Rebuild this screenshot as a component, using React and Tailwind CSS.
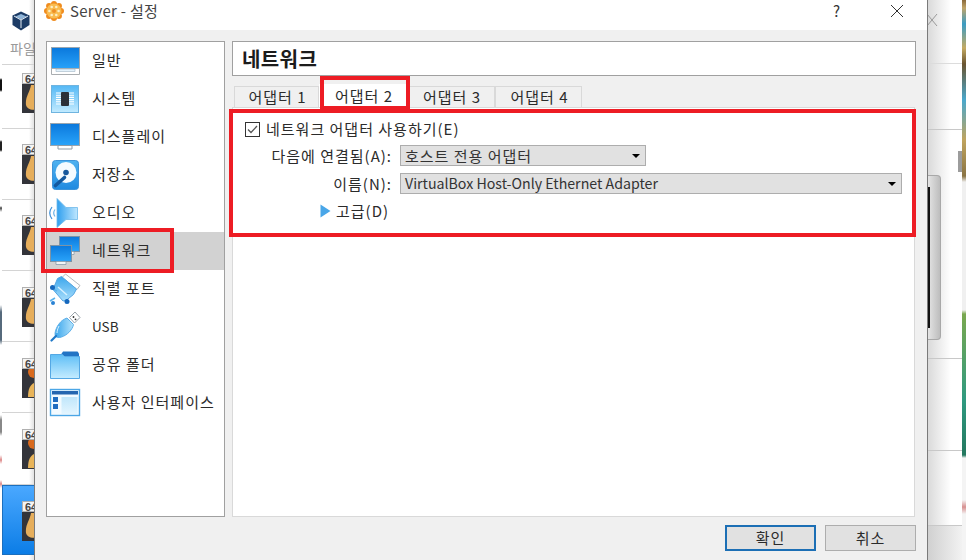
import React from "react";

const Lg = ({ id, a, b, x2 = 0, y2 = 1 }) => (
  <defs>
    <linearGradient id={id} x1="0" y1="0" x2={x2} y2={y2}>
      <stop offset="0" stopColor={a} />
      <stop offset="1" stopColor={b} />
    </linearGradient>
  </defs>
);

const Svg = ({ children, size = 32, vb = 32, className = "" }) => (
  <svg width={size} height={size} viewBox={`0 0 ${vb} ${vb}`} className={`shrink-0 ${className}`}>
    {children}
  </svg>
);

const IconGeneral = () => (
  <Svg>
    <Lg id="g1" a="#0a78dc" b="#2aa4fa" />
    <rect x="2.5" y="2.5" width="28" height="22" fill="url(#g1)" stroke="#9aa6b0" />
    <path d="M2.5 23.5h28v6h-28z" fill="#fff" stroke="#a9adb0" />
    <path d="M7 24h19v2.5H7z" fill="#e4f2fb" stroke="#9fb4c4" strokeWidth=".6" />
  </Svg>
);
const IconSystem = () => (
  <Svg>
    <Lg id="g2" a="#54b8f5" b="#c2ebff" />
    <rect x="2.5" y="2.5" width="27" height="27" fill="url(#g2)" stroke="#6fb4df" />
    <path d="M7 10h18M7 12.200h18M7 14.400h18M7 16.600h18M7 18.800h18M7 21h18" stroke="#fff" strokeWidth="1.100" />
    <rect x="12" y="9" width="8" height="14" rx="1" fill="#2b3038" />
  </Svg>
);
const IconDisplay = () => (
  <Svg>
    <Lg id="g3" a="#0a78dc" b="#2aa4fa" />
    <rect x="1.500" y="2.500" width="29" height="22" fill="url(#g3)" stroke="#9aa6b0" />
    <path d="M9 24.500h14v3.500H9z" fill="#fff" stroke="#8f9ba5" />
  </Svg>
);
const IconStorage = () => (
  <Svg>
    <Lg id="g4" a="#4fb2f0" b="#1f8ae0" />
    <rect x="3.500" y="1.500" width="26" height="29" rx="3" fill="url(#g4)" stroke="#3d93d8" />
    <circle cx="17" cy="13.500" r="10.500" fill="#f4fbff" />
    <circle cx="17" cy="13.500" r="2.800" fill="#16589c" />
    <path d="M6.500 26.500l9-8" stroke="#13599f" strokeWidth="3.600" strokeLinecap="round" />
  </Svg>
);
const IconAudio = () => (
  <Svg>
    <Lg id="g5" a="#2f9fee" b="#bfe7ff" x2={1} y2={0} />
    <path d="M8 1.500l9 9h11.500v12H17l-9 8z" fill="url(#g5)" stroke="#6fb9ea" strokeWidth=".8" />
    <path d="M3 10c-3 4-3 8 0 12" fill="none" stroke="#3d8fd8" strokeWidth="1.200" />
    <path d="M6 12.500c-1.500 2-1.500 5 0 7" fill="none" stroke="#6eb3e6" strokeWidth="1.200" />
  </Svg>
);
const IconNetwork = () => (
  <Svg>
    <Lg id="g6" a="#0a78dc" b="#2aa4fa" />
    <rect x="10.500" y="1.500" width="20" height="15" fill="url(#g6)" stroke="#7c93a6" />
    <path d="M16 16.500h9v3h-9z" fill="#fff" stroke="#7c93a6" strokeWidth=".7" />
    <rect x="1.500" y="10.500" width="21" height="16" fill="url(#g6)" stroke="#7c93a6" />
    <path d="M7 26.500h10v3H7z" fill="#f3f6f8" stroke="#7c93a6" strokeWidth=".7" />
  </Svg>
);
const IconSerial = () => (
  <Svg>
    <Lg id="g7" a="#3ba6ec" b="#a8defc" />
    <path d="M16.500 1l14.500 11.500-3 4L13 4.500z" fill="#fff" stroke="#b3b9bd" />
    <path d="M8.500 5.500l4-2 15 12.500-3 5.500-7.500 6-3 .5L4 16.500z" fill="url(#g7)" stroke="#55a6e3" />
    <path d="M9 14l9 8" stroke="#d6f0ff" strokeWidth="1.500" />
    <path d="M1 28l5-3M17 30l2-3M8 18l-4-2" stroke="#5bb2ec" strokeWidth="1.500" />
    <circle cx="3.500" cy="14.500" r="2.500" fill="#1668bd" />
    <circle cx="18" cy="28.500" r="2.500" fill="#1668bd" />
    <circle cx="4" cy="30" r="2" fill="#2a82d4" />
  </Svg>
);
const IconUsb = () => (
  <Svg>
    <Lg id="g8" a="#39a5ec" b="#b5e4fc" x2={1} y2={0} />
    <path d="M20.500 6.500L26 1l5 5.500-5.500 5.500z" fill="#fff" stroke="#9aa3aa" />
    <circle cx="24.500" cy="6" r=".9" fill="#333" />
    <circle cx="26.500" cy="8.300" r=".9" fill="#333" />
    <path d="M18 7l6.500 6.500c-1 5-6 10.500-12 12.500-3 1-5 .5-6-1S6 19 9.500 13.500C12 10 15 8 18 7z" fill="url(#g8)" stroke="#5baee8" />
    <path d="M7 25l-4.500 4.500" stroke="#1f78c8" strokeWidth="2.200" strokeLinecap="round" />
    <path d="M10 15c-1.500 3-2 5.500-2 7" stroke="#d8f2ff" fill="none" />
  </Svg>
);
const IconFolder = () => (
  <Svg>
    <Lg id="g9" a="#5ebef6" b="#c5ecff" />
    <path d="M14 2.500h14.500l1.500 2V7H11z" fill="#2274c4" />
    <path d="M1.500 5.500h12l2 2H30.500v22h-29z" fill="url(#g9)" stroke="#55a8e4" />
  </Svg>
);
const IconUi = () => (
  <Svg>
    <Lg id="g10" a="#c0e6fb" b="#e3f5ff" />
    <rect x="1.500" y="2.500" width="29" height="26" fill="#f2faff" stroke="#4ba6e6" strokeWidth="1.400" />
    <rect x="3" y="4" width="26" height="3.500" fill="#2465b0" />
    <rect x="4" y="10" width="5" height="5" fill="#1f6cc0" />
    <rect x="4" y="17" width="5" height="5" fill="#1f6cc0" />
    <rect x="12.500" y="10" width="16" height="17" fill="url(#g10)" />
  </Svg>
);

const Gear = () => (
  <svg width="20" height="20" viewBox="0 0 20 20" className="shrink-0">
    {[0, 45, 90, 135, 180, 225, 270, 315].map((a) => (
      <circle
        key={a}
        cx={10 + 7 * Math.cos((a * Math.PI) / 180)}
        cy={10 + 7 * Math.sin((a * Math.PI) / 180)}
        r="3"
        fill="#f08c1e"
      />
    ))}
    <circle cx="10" cy="10" r="7.500" fill="#f9bc50" />
    {[0, 60, 120, 180, 240, 300].map((a) => (
      <circle
        key={a}
        cx={10 + 4.600 * Math.cos((a * Math.PI) / 180)}
        cy={10 + 4.600 * Math.sin((a * Math.PI) / 180)}
        r="1.300"
        fill="#fdeec6"
      />
    ))}
    <circle cx="10" cy="10" r="2" fill="#ee8f28" />
  </svg>
);

const VBoxLogo = () => (
  <svg width="18" height="20" viewBox="0 0 18 20" className="shrink-0">
    <path d="M9 0.500L17.500 4.500V14L9 19.500 0.500 14V4.500z" fill="#1d3c66" />
    <path d="M9 3L14.500 5.500 9 8.500 3.500 5.500z" fill="#8fb4d8" />
    <path d="M9 9v8M2 5l7 4 7-4" stroke="#e6edf4" strokeWidth="1" fill="none" />
  </svg>
);

const Tile = ({ orange }) => (
  <div className="ml-[22px] w-[24px] h-[40px] bg-[#33343a] shrink-0">
    <div className="h-[11px] w-full bg-[#f4f4f4] border border-[#b0b0b0] pl-[2px] text-[11px] leading-[10px] font-bold text-[#444] font-['Liberation_Sans',sans-serif]">
      64
    </div>
    <svg width="24" height="29" viewBox="0 0 24 29" className="block">
      {orange ? (
        <>
          <circle cx="12" cy="3" r="6" fill="#d96a1e" />
          <path d="M6 28c0-8 2-12 6-14 4 2 6 6 6 14z" fill="#e8b45a" />
        </>
      ) : (
        <path d="M9 1c-1 7-6 12-5 20 1 4 6 6 12 4 5-2 6-6 5-10C19 9 14 6 13 1z" fill="#e6ae5c" />
      )}
    </svg>
  </div>
);

const bgRows = [
  { h: "h-[64px]", pt: "pt-[8px]", orange: false },
  { h: "h-[71px]", pt: "pt-[15px]", orange: false },
  { h: "h-[71px]", pt: "pt-[15px]", orange: false },
  { h: "h-[71px]", pt: "pt-[16px]", orange: false },
  { h: "h-[71px]", pt: "pt-[16px]", orange: true },
  { h: "h-[72px]", pt: "pt-[16px]", orange: true },
];

const items = [
  ["일반", IconGeneral],
  ["시스템", IconSystem],
  ["디스플레이", IconDisplay],
  ["저장소", IconStorage],
  ["오디오", IconAudio],
  ["네트워크", IconNetwork],
  ["직렬 포트", IconSerial],
  ["USB", IconUsb],
  ["공유 폴더", IconFolder],
  ["사용자 인터페이스", IconUi],
];

const Combo = ({ children, w, latin }) => (
  <div className={`${w} h-[21px] bg-[#e1e1e1] border border-[#adadad] flex items-center justify-between pl-[4px] pr-[5px] text-[#333] leading-none`}>
    <span className={latin ? "text-[14.200px] tracking-normal" : ""}>{children}</span>
    <span className="w-0 h-0 border-x-[4px] border-x-transparent border-t-[4px] border-t-black" />
  </div>
);

const Tab = ({ children, active, w }) => (
  <div
    className={
      active
        ? `${w} h-[23px] bg-white flex items-center justify-center pl-[2px]`
        : `${w} h-[21px] bg-[#f0f0f0] border border-b-0 border-[#d9d9d9] flex items-center justify-center pl-[2px]`
    }
  >
    {children}
  </div>
);

const rowShade = "bg-[linear-gradient(90deg,#dadada,#fff_60%)]";

export default function App() {
  return (
    <div className="w-[966px] h-[560px] overflow-hidden flex bg-white text-[#2b2b2b] text-[15px] tracking-[1px] font-['Noto_Sans_CJK_KR','Noto_Sans',sans-serif]">
      {/* window behind, left */}
      <div className="w-[34px] shrink-0 h-full flex bg-[linear-gradient(90deg,#fff_85%,#e2e2e2)]">
        <div className="w-[2px] h-full shrink-0 bg-[linear-gradient(180deg,#fff_0,#fff_78px,#111_80px,#111_90px,#fff_92px,#fff_140px,#222_142px,#222_150px,#fff_152px,#fff_206px,#444_208px,#fff_212px,#fff_305px,#566a7c_312px,#566a7c_340px,#fff_345px,#fff_415px,#888_420px,#888_432px,#fff_436px,#fff_455px,#d88_460px,#fff_464px,#fff_480px,#d88_484px,#fff_488px)]" />
        <div className="w-[32px] h-full flex flex-col overflow-hidden tracking-normal">
          <div className="h-[65px] shrink-0 border-b border-[#d4d4d4] flex flex-col pl-[10px] pt-[11px]">
            <VBoxLogo />
            <div className="mt-[7px] -ml-[2px] whitespace-nowrap text-[14px] leading-[20px] text-[#9a9a9a]">파일</div>
          </div>
          <div className="h-[64px] shrink-0 pt-[8px] border-b border-[#d4d4d4] -ml-[2px]">
            <Tile />
          </div>
          {bgRows.slice(1).map((r, i) => (
            <div key={i} className={`${r.h} ${r.pt} shrink-0 -ml-[2px] border-b border-[#d4d4d4]`}>
              <Tile orange={r.orange} />
            </div>
          ))}
          <div className="h-[70px] shrink-0 pt-[15px] bg-[linear-gradient(180deg,#4aa8ff,#0c7de6)] border border-r-0 border-[#1b6fbe]">
            <div className="-ml-[3px]">
              <Tile />
            </div>
          </div>
        </div>
      </div>

      {/* dialog */}
      <div className="w-[894px] shrink-0 h-full flex flex-col bg-[#f0f0f0] border-x border-[#7a7a7a] relative">
        <div className="h-[30px] shrink-0 bg-white flex items-center pl-[9px]">
          <div className="-mt-[8px]"><Gear /></div>
          <span className="ml-[6px] -mt-[8px] text-[15px] text-[#444] tracking-[0.3px]">Server - 설정</span>
          <span className="ml-auto mr-[50px] -mt-[8px] text-[15px] text-[#333] tracking-normal">?</span>
          <svg width="14" height="14" viewBox="0 0 14 14" className="mr-[23px] -mt-[8px]">
            <path d="M1 1l12 12M13 1L1 13" stroke="#333" strokeWidth="1" />
          </svg>
        </div>

        <div className="flex pl-[11px] pt-[11px] gap-[7px] shrink-0">
          <div className="w-[179px] h-[476px] shrink-0 bg-white border border-[#a0a0a0]">
            {items.map(([label, Icon], i) => (
              <div
                key={label}
                className={`h-[38px] flex items-center pl-[2px] gap-[11px] whitespace-nowrap ${i === 5 ? "bg-[#d2d2d2]" : ""}`}
              >
                <Icon />
                <span className={`-mt-[2px] ${label === "USB" ? "text-[13.500px] tracking-normal" : ""}`}>{label}</span>
              </div>
            ))}
          </div>

          <div className="w-[684px] h-[476px] shrink-0 flex flex-col">
            <div className="h-[35px] shrink-0 bg-white border border-[#a0a0a0] flex items-center pl-[9px] text-[20px] tracking-[0.4px] font-bold text-[#1c1c1c]">
              네트워크
            </div>
            <div className="flex pl-[2px] mt-[8px] items-end h-[23px] shrink-0 leading-[20px]">
              <Tab w="w-[85px]">어댑터 1</Tab>
              <Tab active w="w-[88px]">어댑터 2</Tab>
              <Tab w="w-[88px]">어댑터 3</Tab>
              <Tab w="w-[87px]">어댑터 4</Tab>
            </div>
            <div className="w-[683px] flex-1 bg-white border border-[#d9d9d9]">
              <div className="flex items-center pl-[12px] mt-[12px] h-[18px]">
                <span className="w-[15px] h-[15px] border border-[#333] bg-white flex items-center justify-center">
                  <svg width="11" height="9" viewBox="0 0 11 9"><path d="M1 4.500l3 3 6-6.500" fill="none" stroke="#555" strokeWidth="1.300" /></svg>
                </span>
                <span className="ml-[6px] whitespace-nowrap">네트워크 어댑터 사용하기(E)</span>
              </div>
              <div className="flex items-center mt-[7px] h-[21px] gap-[8px]">
                <span className="w-[159px] text-right whitespace-nowrap leading-[21px]">다음에 연결됨(A):</span>
                <Combo w="w-[246px]">호스트 전용 어댑터</Combo>
              </div>
              <div className="flex items-center mt-[7px] h-[21px] gap-[8px]">
                <span className="w-[159px] text-right whitespace-nowrap leading-[21px]">이름(N):</span>
                <Combo w="w-[502px]" latin>VirtualBox Host-Only Ethernet Adapter</Combo>
              </div>
              <div className="flex items-center mt-[6px] pl-[87px] h-[21px]">
                <svg width="11" height="14" viewBox="0 0 11 14"><path d="M0.500 0.500L10.500 7 0.500 13.500z" fill="#49a6e8" /></svg>
                <span className="ml-[5px] leading-[21px]">고급(D)</span>
              </div>
            </div>
          </div>
        </div>

        <div className="flex justify-end gap-[9px] pr-[11px] mt-[8px] text-[15px] tracking-[1px]">
          <button className="w-[91px] h-[26px] bg-[#e1e1e1] border-2 border-[#1c6fb5] flex items-center justify-center">확인</button>
          <button className="w-[91px] h-[26px] bg-[#e1e1e1] border border-[#adadad] flex items-center justify-center">취소</button>
        </div>

        {/* red annotation rectangles */}
        <div className="absolute left-[6px] top-[228px] w-[133px] h-[45px] border-4 border-[#ed1c24]" />
        <div className="absolute left-[285px] top-[76px] w-[90px] h-[34px] border-4 border-[#ed1c24]" />
        <div className="absolute left-[194px] top-[109px] w-[687px] h-[128px] border-4 border-[#ed1c24]" />
      </div>

      {/* window behind, right */}
      <div className="flex-1 h-full flex flex-col bg-white relative overflow-hidden">
        <div className={`h-[64px] shrink-0 border-b border-[#dcdcdc] ${rowShade}`}>
          <svg width="12" height="14" viewBox="0 0 12 14" className="-ml-[1px] mt-[13px]"><path d="M0 1l10 12M10 1L0 13" stroke="#999" /></svg>
        </div>
        <div className={`h-[66px] shrink-0 border-b border-[#c8c8c8] ${rowShade}`} />
        <div className={`h-[229px] shrink-0 border-b border-[#c8c8c8] pt-[45px] ${rowShade}`}>
          <div className="w-[13px] h-[165px] rounded-r-[4px] border border-l-0 border-[#a8a8a8] bg-[linear-gradient(90deg,#e4e4e4,#bdbdbd)] pt-[11px]">
            <div className="w-[2px] h-[141px] bg-[#111]" />
          </div>
        </div>
        <div className={`h-[92px] shrink-0 border-b border-[#c8c8c8] ${rowShade}`} />
        <div className={`h-[75px] shrink-0 border-b border-[#c8c8c8] ${rowShade}`} />
        <div className="flex-1 bg-[linear-gradient(90deg,#d0d0d0,#f6f6f6)]" />
        <div className="absolute right-[4px] top-[151px] w-[4px] h-[21px] bg-[#9c9c9c]" />
        <div className="absolute right-0 top-0 w-[4px] h-full bg-[linear-gradient(180deg,#8a6a3c_0,#c0a468_8px,#3a9cc4_24px,#c4aa62_48px,#6a5430_64px,#4aa8cc_100px,#c0a45e_140px,#8a7444_176px,#f0f0f0_182px,#f0f0f0_310px,#7aa84f_314px,#2f9a80_400px,#24785f_455px,#f4f4f4_458px,#f4f4f4_500px,#d79090_507px,#f4f4f4_514px)]" />
      </div>
    </div>
  );
}
